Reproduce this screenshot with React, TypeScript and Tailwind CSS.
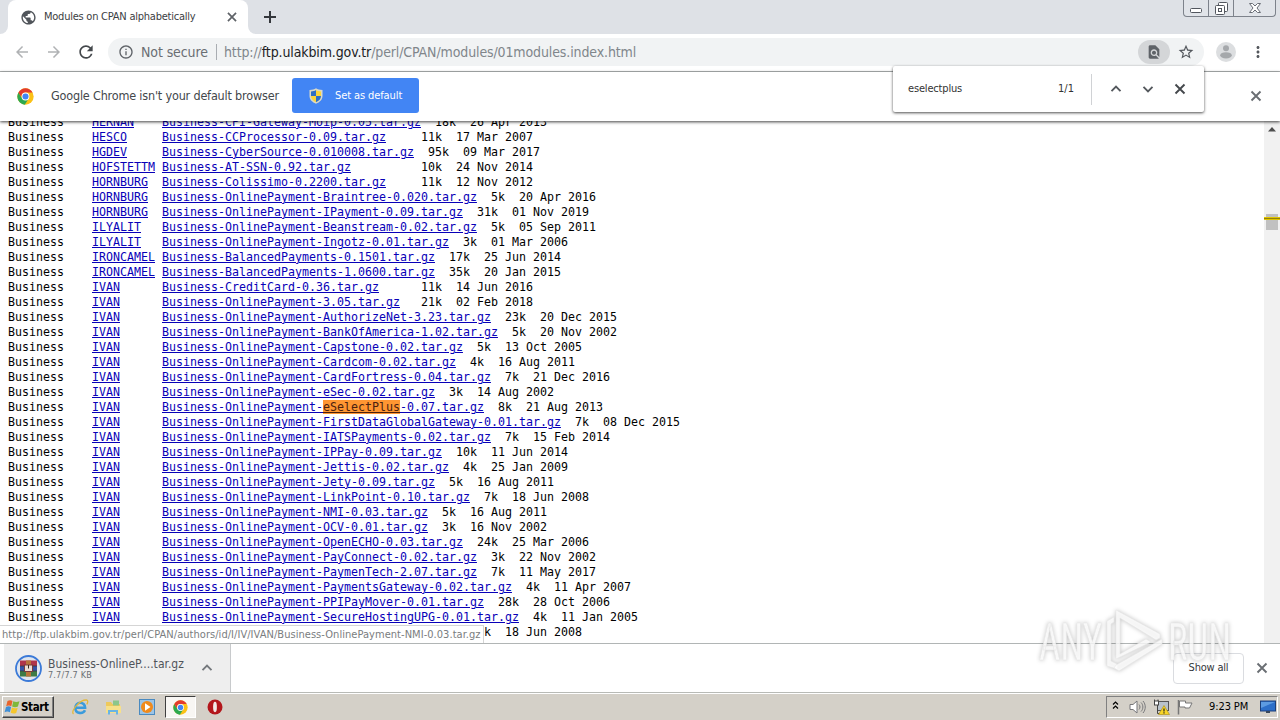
import type { ReactNode } from "react";
import {
  MdArrowBack,
  MdArrowForward,
  MdFindInPage,
  MdInfoOutline,
  MdMoreVert,
  MdPublic,
  MdRefresh,
  MdStarBorder,
} from "react-icons/md";

interface ModuleRow {
  author: string;
  file: string;
  size: string;
  date: string;
}

const SEARCH = "eSelectPlus";

const rows: ModuleRow[] = [
  { author: "HERNAN", file: "Business-CPI-Gateway-Moip-0.05.tar.gz", size: "18k", date: "26 Apr 2013" },
  { author: "HESCO", file: "Business-CCProcessor-0.09.tar.gz", size: "11k", date: "17 Mar 2007" },
  { author: "HGDEV", file: "Business-CyberSource-0.010008.tar.gz", size: "95k", date: "09 Mar 2017" },
  { author: "HOFSTETTM", file: "Business-AT-SSN-0.92.tar.gz", size: "10k", date: "24 Nov 2014" },
  { author: "HORNBURG", file: "Business-Colissimo-0.2200.tar.gz", size: "11k", date: "12 Nov 2012" },
  { author: "HORNBURG", file: "Business-OnlinePayment-Braintree-0.020.tar.gz", size: "5k", date: "20 Apr 2016" },
  { author: "HORNBURG", file: "Business-OnlinePayment-IPayment-0.09.tar.gz", size: "31k", date: "01 Nov 2019" },
  { author: "ILYALIT", file: "Business-OnlinePayment-Beanstream-0.02.tar.gz", size: "5k", date: "05 Sep 2011" },
  { author: "ILYALIT", file: "Business-OnlinePayment-Ingotz-0.01.tar.gz", size: "3k", date: "01 Mar 2006" },
  { author: "IRONCAMEL", file: "Business-BalancedPayments-0.1501.tar.gz", size: "17k", date: "25 Jun 2014" },
  { author: "IRONCAMEL", file: "Business-BalancedPayments-1.0600.tar.gz", size: "35k", date: "20 Jan 2015" },
  { author: "IVAN", file: "Business-CreditCard-0.36.tar.gz", size: "11k", date: "14 Jun 2016" },
  { author: "IVAN", file: "Business-OnlinePayment-3.05.tar.gz", size: "21k", date: "02 Feb 2018" },
  { author: "IVAN", file: "Business-OnlinePayment-AuthorizeNet-3.23.tar.gz", size: "23k", date: "20 Dec 2015" },
  { author: "IVAN", file: "Business-OnlinePayment-BankOfAmerica-1.02.tar.gz", size: "5k", date: "20 Nov 2002" },
  { author: "IVAN", file: "Business-OnlinePayment-Capstone-0.02.tar.gz", size: "5k", date: "13 Oct 2005" },
  { author: "IVAN", file: "Business-OnlinePayment-Cardcom-0.02.tar.gz", size: "4k", date: "16 Aug 2011" },
  { author: "IVAN", file: "Business-OnlinePayment-CardFortress-0.04.tar.gz", size: "7k", date: "21 Dec 2016" },
  { author: "IVAN", file: "Business-OnlinePayment-eSec-0.02.tar.gz", size: "3k", date: "14 Aug 2002" },
  { author: "IVAN", file: "Business-OnlinePayment-eSelectPlus-0.07.tar.gz", size: "8k", date: "21 Aug 2013" },
  { author: "IVAN", file: "Business-OnlinePayment-FirstDataGlobalGateway-0.01.tar.gz", size: "7k", date: "08 Dec 2015" },
  { author: "IVAN", file: "Business-OnlinePayment-IATSPayments-0.02.tar.gz", size: "7k", date: "15 Feb 2014" },
  { author: "IVAN", file: "Business-OnlinePayment-IPPay-0.09.tar.gz", size: "10k", date: "11 Jun 2014" },
  { author: "IVAN", file: "Business-OnlinePayment-Jettis-0.02.tar.gz", size: "4k", date: "25 Jan 2009" },
  { author: "IVAN", file: "Business-OnlinePayment-Jety-0.09.tar.gz", size: "5k", date: "16 Aug 2011" },
  { author: "IVAN", file: "Business-OnlinePayment-LinkPoint-0.10.tar.gz", size: "7k", date: "18 Jun 2008" },
  { author: "IVAN", file: "Business-OnlinePayment-NMI-0.03.tar.gz", size: "5k", date: "16 Aug 2011" },
  { author: "IVAN", file: "Business-OnlinePayment-OCV-0.01.tar.gz", size: "3k", date: "16 Nov 2002" },
  { author: "IVAN", file: "Business-OnlinePayment-OpenECHO-0.03.tar.gz", size: "24k", date: "25 Mar 2006" },
  { author: "IVAN", file: "Business-OnlinePayment-PayConnect-0.02.tar.gz", size: "3k", date: "22 Nov 2002" },
  { author: "IVAN", file: "Business-OnlinePayment-PaymenTech-2.07.tar.gz", size: "7k", date: "11 May 2017" },
  { author: "IVAN", file: "Business-OnlinePayment-PaymentsGateway-0.02.tar.gz", size: "4k", date: "11 Apr 2007" },
  { author: "IVAN", file: "Business-OnlinePayment-PPIPayMover-0.01.tar.gz", size: "28k", date: "28 Oct 2006" },
  { author: "IVAN", file: "Business-OnlinePayment-SecureHostingUPG-0.01.tar.gz", size: "4k", date: "11 Jan 2005" },
];

function Cross({ className }: { className: string }) {
  return (
    <svg viewBox="0 0 16 16" className={`h-4 w-4 shrink-0 ${className}`} fill="none" stroke="currentColor" strokeWidth="1.9">
      <path d="M3.500 3.500 12.500 12.500M12.500 3.500 3.500 12.500" />
    </svg>
  );
}

function Chevron({ className }: { className: string }) {
  return (
    <svg viewBox="0 0 16 16" className={`h-4 w-4 shrink-0 ${className}`} fill="none" stroke="currentColor" strokeWidth="1.9">
      <path d="M3.500 10.200 8 5.700 12.500 10.200" />
    </svg>
  );
}

function ChromeLogo({ className }: { className: string }) {
  return (
    <svg viewBox="0 0 48 48" className={className}>
      <circle cx="24" cy="24" r="23" fill="#fbc116" />
      <path d="M4.100 12.500A23 23 0 0 0 22 47L33 29.500 24 24 14.500 29.500Z" fill="#2da94f" />
      <path d="M4.100 12.500A23 23 0 0 1 43.900 12.500H24A11.500 11.500 0 0 0 13 27.500Z" fill="#e33b2e" />
      <circle cx="24" cy="24" r="11" fill="#fff" />
      <circle cx="24" cy="24" r="8.600" fill="#4285f4" />
    </svg>
  );
}

function ShieldIcon() {
  return (
    <svg viewBox="0 0 16 16" className="h-4 w-4">
      <path d="M8 .3C9.500 1.500 12 2 14.500 2V8c0 3.800-2.800 6.200-6.500 7.700C4.300 14.200 1.500 11.800 1.500 8V2C4 2 6.500 1.500 8 .3Z" fill="#d9d9c8" />
      <path d="M8 2v6H3V3.400C5 3.400 6.800 3 8 2Z" fill="#2f6fc4" />
      <path d="M8 2v6h5V3.400C11 3.400 9.200 3 8 2Z" fill="#fbd53a" />
      <path d="M3 8h5v6.200C5 12.800 3 10.900 3 8Z" fill="#fbd53a" />
      <path d="M13 8H8v6.200c3-1.400 5-3.300 5-6.200Z" fill="#2f6fc4" />
    </svg>
  );
}

function WindowButtons() {
  return (
    <div className="flex h-[17px] w-[93px] rounded-b-[4px] border border-t-0 border-[#7d828b] bg-[#e1e4e9]">
      <div className="flex w-[25px] justify-center border-r border-[#7d828b] pt-2">
        <svg viewBox="0 0 12 5" className="h-[5px] w-3">
          <rect x=".5" y=".5" width="11" height="4" rx="1" fill="#fff" stroke="#52565e" />
        </svg>
      </div>
      <div className="flex w-[25px] justify-center border-r border-[#7d828b] pt-[2px]">
        <svg viewBox="0 0 13 13" className="h-[13px] w-[13px]" fill="#fff" stroke="#52565e">
          <rect x="3.500" y=".5" width="9" height="9" rx="1" />
          <rect x=".5" y="3.500" width="9" height="9" rx="1" />
          <rect x="3.500" y="6.500" width="3" height="3" />
        </svg>
      </div>
      <div className="flex flex-1 justify-center pt-[3px]">
        <svg viewBox="0 0 12 10" className="h-[10px] w-3">
          <path d="M.5.5h3L6 3 8.500.5h3L8 5l3.500 4.500h-3L6 7 3.500 9.500h-3L4 5Z" fill="#fff" stroke="#6a6e76" />
        </svg>
      </div>
    </div>
  );
}

function TabStrip() {
  return (
    <div className="flex h-[34px] items-start bg-[#dee1e6]">
      <div className="h-[34px] w-2 shrink-0 bg-white">
        <div className="h-[34px] w-2 rounded-br-lg bg-[#dee1e6]" />
      </div>
      <div className="flex h-[34px] w-[240px] shrink-0 items-center rounded-t-lg bg-white pl-3 pr-2">
        <MdPublic className="h-[17px] w-[17px] text-[#50545a]" />
        <span className="ml-[7px] flex-1 whitespace-nowrap text-[11px] tracking-[-0.24px] text-[#3c4043]">Modules on CPAN alphabetically</span>
        <Cross className="scale-90 text-[#5f6368]" />
      </div>
      <div className="h-[34px] w-2 shrink-0 bg-white">
        <div className="h-[34px] w-2 rounded-bl-lg bg-[#dee1e6]" />
      </div>
      <svg viewBox="0 0 12 12" className="ml-2 mt-[11px] h-3 w-3" stroke="#34373c" strokeWidth="2">
        <path d="M6 0v12M0 6h12" />
      </svg>
      <div className="ml-auto mr-[4px]">
        <WindowButtons />
      </div>
    </div>
  );
}

function Toolbar() {
  return (
    <div className="flex h-[38px] shrink-0 items-center border-b border-[#b1b5b5] bg-white pb-px">
      <MdArrowBack className="ml-[13px] h-[18px] w-[18px] text-[#b0b2b4]" />
      <MdArrowForward className="ml-[14px] h-[18px] w-[18px] text-[#b0b2b4]" />
      <MdRefresh className="ml-[13px] h-5 w-5 text-[#44484c]" />
      <div className="ml-[12px] flex h-7 w-[1096px] items-center rounded-full bg-[#f1f3f4] pl-[10px]">
        <MdInfoOutline className="h-4 w-4 text-[#5f6368]" />
        <span className="ml-[7px] w-[67px] whitespace-nowrap text-[14px] tracking-[-0.1px] text-[#6a6e73]">Not secure</span>
        <span className="ml-2 h-4 w-px bg-[#a9adb2]" />
        <span className="ml-[7px] flex-1 whitespace-nowrap text-[14px] tracking-[-0.12px] text-[#80868b]">
          http://<span className="text-[#202124]">ftp.ulakbim.gov.tr</span>/perl/CPAN/modules/01modules.index.html
        </span>
        <div className="flex h-6 w-8 items-center justify-center rounded-full bg-[#d4d6d8]">
          <MdFindInPage className="h-4 w-4 text-[#5f6368]" />
        </div>
        <MdStarBorder className="ml-2 mr-[10px] h-4 w-4 scale-110 text-[#54585d]" />
      </div>
      <svg viewBox="0 0 20 20" className="ml-[12px] h-5 w-5">
        <circle cx="10" cy="10" r="10" fill="#dcdee0" />
        <circle cx="10" cy="6.200" r="3" fill="#a5a8ab" />
        <ellipse cx="10" cy="13.300" rx="5.800" ry="3.100" fill="#a5a8ab" />
      </svg>
      <MdMoreVert className="ml-[13px] h-[18px] w-[18px] text-[#54585d]" />
    </div>
  );
}

function InfoBar() {
  return (
    <div className="z-10 flex h-[49px] shrink-0 items-center bg-white pb-[2px] shadow-[0_1px_3px_rgba(0,0,0,0.75)]">
      <ChromeLogo className="ml-[17px] mt-px h-[17px] w-[17px]" />
      <span className="ml-[17px] w-[229px] whitespace-nowrap pt-px text-[12.5px] tracking-[-0.18px] text-[#43474b]">Google Chrome isn't your default browser</span>
      <div className="ml-3 flex h-[35px] w-[127px] items-center rounded-[3px] bg-[#4285f4] pl-4">
        <ShieldIcon />
        <span className="ml-[11px] whitespace-nowrap pt-px text-[11px] tracking-[-0.1px] text-white">Set as default</span>
      </div>
      <Cross className="ml-auto mr-[16px] mt-px text-[#6a6e73]" />
    </div>
  );
}

function FindBar() {
  return (
    <div className="absolute left-[893px] top-[66px] z-20 flex h-[46px] w-[311px] items-center rounded-[2px] bg-white pl-[15px] pr-4 text-[11px] text-[#333] shadow-[0_1px_3px_rgba(0,0,0,0.7)]">
      <span className="pt-px tracking-[-0.17px]">eselectplus</span>
      <span className="ml-auto pt-px">1/1</span>
      <span className="ml-[17px] h-[31px] w-px bg-[#d0d2d5]" />
      <Chevron className="ml-4 text-[#54585d]" />
      <Chevron className="ml-4 rotate-180 text-[#54585d]" />
      <Cross className="ml-4 text-[#44484c]" />
    </div>
  );
}

function Link({ children }: { children: ReactNode }) {
  return <a className="text-[#0800b8] underline decoration-1 underline-offset-1">{children}</a>;
}

function FileName({ name }: { name: string }) {
  const at = name.indexOf(SEARCH);
  if (at < 0) return <>{name}</>;
  return (
    <>
      {name.slice(0, at)}
      <mark className="bg-[#ff9632] text-[#4a2010] underline">{SEARCH}</mark>
      {name.slice(at + SEARCH.length)}
    </>
  );
}

function ModuleList() {
  return (
    <div className="-mt-[6px] flex-1 pl-2 font-['DejaVu_Sans_Mono',monospace] text-[11.63px] leading-[15px] text-black">
      {rows.map((row) => (
        <div key={row.file} className="h-[15px] whitespace-pre">
          {"Business".padEnd(12)}
          <Link>{row.author}</Link>
          {" ".repeat(10 - row.author.length)}
          <Link>
            <FileName name={row.file} />
          </Link>
          {" ".repeat(Math.max(35 - row.file.length, 0) + 2)}
          {row.size}
          {"  "}
          {row.date}
        </div>
      ))}
      {/* the status bubble covers the start of this row */}
      <div className="h-[15px] whitespace-pre pl-[476px]">{"k  18 Jun 2008"}</div>
    </div>
  );
}

function Scrollbar() {
  return (
    <div className="flex w-4 flex-col items-center bg-[#f1f1f1]">
      <svg viewBox="0 0 16 16" className="h-4 w-4">
        <path d="M4 10.500 8 6l4 4.500Z" fill="#4d4d4d" />
      </svg>
      <div className="mt-[77px] flex h-4 w-3 flex-col bg-[#c1c1c1] pt-[3px]">
        <div className="-mx-[2px] h-[3px] border-y border-[#e0c400] bg-[#94800c]" />
      </div>
    </div>
  );
}

function WinrarIcon() {
  return (
    <svg viewBox="0 0 27 27" className="h-[27px] w-[27px]">
      <circle cx="13.500" cy="13.500" r="12.500" fill="#dfe5ee" stroke="#3b7ad8" strokeWidth="1.800" />
      <rect x="5" y="5.500" width="17" height="5.500" fill="#b0344a" />
      <rect x="5" y="11" width="17" height="5" fill="#3653a5" />
      <rect x="5" y="16" width="17" height="5.500" fill="#3d7a45" />
      <path d="M5 11h17M5 16h17" stroke="#333" strokeWidth=".7" />
      <rect x="11" y="5.500" width="5" height="16" fill="#b8743a" />
      <rect x="9.500" y="10" width="8" height="6.500" fill="#e9dcd3" stroke="#7a3a3c" />
      <path d="M13.500 10v3.500" stroke="#3a2a20" />
    </svg>
  );
}

function DownloadBar() {
  return (
    <div className="flex h-[49px] shrink-0 items-center border-t border-[#b1b5b5] bg-white">
      <div className="ml-[4px] flex h-[48px] w-[227px] items-center border-r border-[#c8cacc] bg-[#eeeeee] pl-[11px]">
        <WinrarIcon />
        <div className="ml-[6px] w-[136px] whitespace-nowrap pt-[2px]">
          <div className="text-[12px] leading-[13px] tracking-[0.03px] text-[#50545a]">Business-OnlineP....tar.gz</div>
          <div className="text-[9px] leading-[9px] tracking-[0.2px] text-[#6a6e73]">7.7/7.7 KB</div>
        </div>
        <Chevron className="ml-[15px] text-[#74787c]" />
      </div>
      <div className="ml-auto mr-[10px] flex h-[31px] w-[71px] items-center justify-center rounded-[4px] border border-[#dadce0] bg-white text-[11px] tracking-[-0.2px] text-[#33373b]">
        Show all
      </div>
      <Cross className="mr-[10px] text-[#6a6e73]" />
    </div>
  );
}

function WindowsFlag() {
  return (
    <svg viewBox="0 0 17 16" className="h-4 w-[17px]">
      <path d="M3.500 2C5.500.8 7 1 8.500 2L7.300 7.200C5.500 6.200 4 6.300 2.200 7.200Z" fill="#e8642c" />
      <path d="M9.300 2.300c2 1 3.800 1 6.200 0l-1.600 5.300c-2 .9-4 .8-5.800-.1Z" fill="#7fb83a" />
      <path d="M2 8c2-1 3.500-.8 5.100.1L5.900 13.300C4 12.300 2.500 12.300.6 13.300Z" fill="#3f8fd6" />
      <path d="M7.900 8.500c2 1 3.800 1 5.800.2l-1.500 5.200c-2 .9-3.700.8-5.500-.2Z" fill="#f5c62c" />
    </svg>
  );
}

function TaskIcons() {
  return (
    <>
      <div className="ml-[17px] flex h-[22px] w-[18px] items-center">
        <svg viewBox="0 0 18 18" className="h-[18px] w-[18px]" fill="none">
          <path d="M4.500 9.700h9.600c0-6.700-9.800-6.500-9.800.3 0 6 7.800 6.200 9.700 2.300" stroke="#3a9bdc" strokeWidth="2.600" />
          <path d="M2.500 16C-.5 13 9 1.500 15.500 2c2 .3 1.200 2.800.3 4.300" stroke="#e3b83a" strokeWidth="1.300" />
        </svg>
      </div>
      <div className="ml-4 flex h-[22px] w-[17px] items-center">
        <svg viewBox="0 0 17 17" className="h-[17px] w-[17px]">
          <path d="M1 3h5l1.500 2H15v9H1Z" fill="#eec95c" />
          <path d="M8 1.500h6v5H8Z" fill="#8cc68b" />
          <path d="M1 7h15v7H1Z" fill="#f7e08a" />
          <path d="M3 15.500V11h10v4.500h-2V13H5v2.500Z" fill="#69b4e4" />
        </svg>
      </div>
      <div className="ml-[17px] flex h-[22px] w-[16px] items-center">
        <svg viewBox="0 0 16 16" className="h-4 w-4">
          <rect x=".5" y=".5" width="15" height="15" fill="#9cc4e6" stroke="#4a8ac0" />
          <circle cx="8" cy="8" r="6" fill="#f08a1c" />
          <path d="M6 4.300 11.500 8 6 11.700Z" fill="#fff" />
        </svg>
      </div>
      <div className="ml-[10px] flex h-[22px] w-[31px] items-center justify-center border border-b-white border-r-white border-l-[#404040] border-t-[#404040] bg-[#f8f6f3]">
        <ChromeLogo className="h-[15px] w-[15px]" />
      </div>
      <div className="ml-[11px] flex h-[22px] w-4 items-center">
        <svg viewBox="0 0 16 16" className="h-4 w-4">
          <circle cx="8" cy="8" r="7.500" fill="#b3161b" />
          <ellipse cx="8" cy="8" rx="1.900" ry="5.200" fill="#f3e9e6" />
        </svg>
      </div>
    </>
  );
}

function Tray() {
  return (
    <div className="ml-auto mr-[2px] flex h-[22px] w-[172px] items-center border border-b-white border-r-white border-l-[#808080] border-t-[#808080] pl-[5px]">
      <svg viewBox="0 0 7 8" className="mb-1 h-2 w-[7px] shrink-0" fill="none" stroke="#000" strokeWidth="1.200">
        <path d="M1 3.500 3.500 1 6 3.500M1 7.500 3.500 5 6 7.500" />
      </svg>
      <svg viewBox="0 0 17 16" className="mb-px ml-[10px] h-4 w-[17px] shrink-0" fill="none" stroke="#77777a">
        <path d="M1 5.500h3L8 2v12l-4-3.500H1Z" fill="#fff" />
        <path d="M10 5.500c1.300 1.500 1.300 3.500 0 5M12 3.500c2.500 2.500 2.500 6.500 0 9M14 2c3 3.500 3 8.500 0 12" />
      </svg>
      <svg viewBox="0 0 17 16" className="mb-px ml-[7px] h-4 w-[17px] shrink-0">
        <rect x="4.500" y="2.500" width="11" height="9" fill="#b9c2cb" stroke="#555" />
        <path d="M1.500.5v4h3v10h3M5 .5v4" fill="none" stroke="#444" />
        <rect x="1.500" y="2" width="4" height="4" fill="#fff" stroke="#444" />
        <path d="M11 6.500 16.500 15.500H5.500Z" fill="#f8d528" stroke="#a88b10" strokeWidth=".6" />
        <path d="M11 9.500v3M11 13.300v1.200" stroke="#222" strokeWidth="1.200" />
      </svg>
      <svg viewBox="0 0 16 16" className="mb-px ml-[7px] h-4 w-4 shrink-0">
        <path d="M1.500 1v14.500" stroke="#777" strokeWidth="1.500" />
        <path d="M2.500 2h6v2h6.500l-2.500 5H8V8H2.500Z" fill="#fff" stroke="#777" />
      </svg>
      <span className="ml-[16px] w-[40px] shrink-0 whitespace-nowrap text-[11px] tracking-[-0.1px] text-black">9:23 PM</span>
      <svg viewBox="0 0 16 14" className="ml-[11px] h-[14px] w-4 shrink-0">
        <rect x=".5" y="1" width="15" height="10" fill="#2d6fc9" stroke="#1c3f7a" />
        <path d="M1 2h14L1 8Z" fill="#5d9be2" />
        <path d="M6 11h4v2H6Z" fill="#39485c" />
      </svg>
    </div>
  );
}

function Taskbar() {
  return (
    <div className="flex h-[28px] shrink-0 items-center border-t border-[#b8bab6] bg-[#d4d0c8] pt-px shadow-[inset_0_1px_0_#fff]">
      <div className="ml-[2px] flex h-[22px] w-[52px] items-center border border-b-[#404040] border-r-[#404040] border-l-white border-t-white pl-px shadow-[inset_-1px_-1px_0_#808080]">
        <WindowsFlag />
        <span className="whitespace-nowrap pt-px text-[11.5px] font-bold tracking-[-0.35px] text-black">Start</span>
      </div>
      <TaskIcons />
      <Tray />
    </div>
  );
}

function Watermark() {
  return (
    <svg viewBox="0 0 200 70" className="pointer-events-none absolute left-[1036px] top-[606px] z-30 h-[70px] w-[200px]">
      <g
        className="font-['Roboto',sans-serif] drop-shadow-[0_0_2px_rgba(0,0,0,0.28)]"
        fill="#fff"
        fillOpacity=".8"
        stroke="#e6e6e6"
        strokeWidth=".6"
        fontSize="52"
      >
        <text x="3" y="54" textLength="63" lengthAdjust="spacingAndGlyphs">ANY</text>
        <text x="132" y="54" textLength="63" lengthAdjust="spacingAndGlyphs">RUN</text>
        <path d="M71 60V15l7-4v5l-3 2v37l6 3v5Z" />
        <path d="M80 53V4l44 24v4l-4 2L84 12v36l26-15 5 3Z" />
        <path d="M80 59 126 33v5L83 65l-5-3Z" />
      </g>
    </svg>
  );
}

export default function App() {
  return (
    <div className="relative flex h-[720px] w-[1280px] flex-col overflow-hidden bg-white font-['DejaVu_Sans_Condensed','DejaVu_Sans',sans-serif] [font-stretch:condensed]">
      <TabStrip />
      <Toolbar />
      <InfoBar />
      <div className="relative flex h-[522px] shrink-0 overflow-hidden">
        <ModuleList />
        <Scrollbar />
        {/* hovered link target */}
        <div className="absolute bottom-0 left-0 flex h-[18px] w-[484px] items-center whitespace-nowrap border-r border-t border-[#d5d5d5] bg-white pl-[2px] pt-px text-[11px] tracking-[0.045px] text-[#7a7d80]">
          http://ftp.ulakbim.gov.tr/perl/CPAN/authors/id/I/IV/IVAN/Business-OnlinePayment-NMI-0.03.tar.gz
        </div>
      </div>
      <DownloadBar />
      <Taskbar />
      <FindBar />
      <Watermark />
    </div>
  );
}
